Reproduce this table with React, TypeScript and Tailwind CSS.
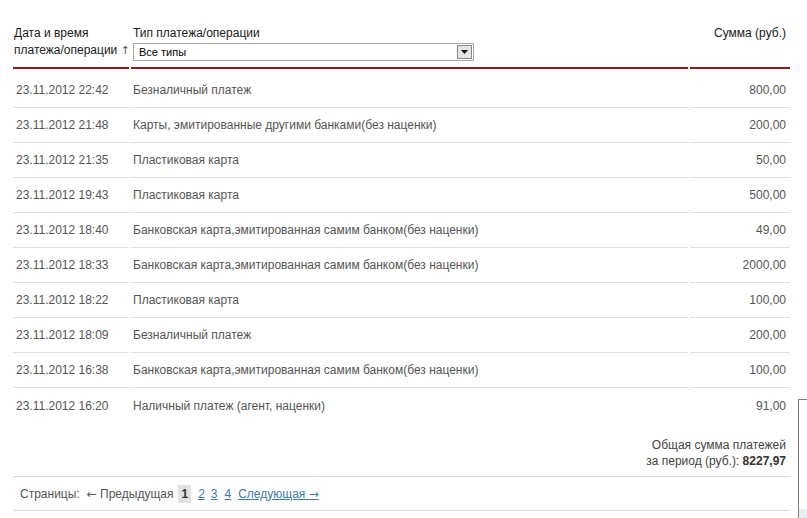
import React from 'react';

const ROWS: [string, string, string][] = [
  ['23.11.2012 22:42', 'Безналичный платеж', '800,00'],
  ['23.11.2012 21:48', 'Карты, эмитированные другими банками(без наценки)', '200,00'],
  ['23.11.2012 21:35', 'Пластиковая карта', '50,00'],
  ['23.11.2012 19:43', 'Пластиковая карта', '500,00'],
  ['23.11.2012 18:40', 'Банковская карта,эмитированная самим банком(без наценки)', '49,00'],
  ['23.11.2012 18:33', 'Банковская карта,эмитированная самим банком(без наценки)', '2000,00'],
  ['23.11.2012 18:22', 'Пластиковая карта', '100,00'],
  ['23.11.2012 18:09', 'Безналичный платеж', '200,00'],
  ['23.11.2012 16:38', 'Банковская карта,эмитированная самим банком(без наценки)', '100,00'],
  ['23.11.2012 16:20', 'Наличный платеж (агент, наценки)', '91,00'],
];

const arrowFont = { fontFamily: '"DejaVu Sans", sans-serif' };

export default function App() {
  return (
    <div
      className="relative h-[518px] w-[807px] overflow-hidden bg-white text-[12px]"
      style={{ fontFamily: '"Liberation Sans", Arial, sans-serif' }}
    >
      <div className="ml-[13px] w-[777px]">
        {/* Header */}
        <div className="flex gap-[2px] pt-[25px] leading-[17px] text-[#1a1a1a]">
          <div className="w-[116px] pl-[1px] pb-[8px] border-b-2 border-[#8c1d1d]">
            <div>Дата и время</div>
            <div className="whitespace-nowrap">
              платежа/операции <span className="text-[11px] text-[#555]" style={arrowFont}>↑</span>
            </div>
          </div>
          <div className="w-[557px] pl-[2px] border-b-2 border-[#8c1d1d]">
            <div>Тип платежа/операции</div>
            <div className="mt-[1px] flex h-[18px] w-[341px] items-center border border-[#a5a5a5] bg-white">
              <span className="flex-1 pl-[5px] text-[11px] leading-none text-black">Все типы</span>
              <span className="mr-[1px] flex h-[14px] w-[15px] items-center justify-center border border-[#8a8a8a] bg-[#e4e4e4]">
                <svg width="7" height="4" viewBox="0 0 7 4">
                  <path d="M0 0h7L3.5 4z" fill="#111" />
                </svg>
              </span>
            </div>
          </div>
          <div className="w-[100px] pr-[4px] text-right border-b-2 border-[#8c1d1d]">Сумма (руб.)</div>
        </div>

        {/* Body */}
        <div className="pt-[4px] text-[#555]">
          {ROWS.map(([date, type, sum], i) => {
            const last = i === ROWS.length - 1;
            const b = last ? '' : 'border-b border-[#dedede]';
            return (
              <div key={i} className="flex h-[35px] gap-[2px]">
                <div className={`flex w-[116px] items-center pl-[3px] ${b}`}>{date}</div>
                <div className={`flex w-[557px] items-center pl-[2px] ${b}`}>{type}</div>
                <div className={`flex w-[100px] items-center justify-end pr-[4px] ${b}`}>{sum}</div>
              </div>
            );
          })}
        </div>

        {/* Total */}
        <div className="border-b border-[#d8d8d8] pt-[14px] pb-[7px] pr-[4px] text-right leading-[16px] text-[#444]">
          <div>Общая сумма платежей</div>
          <div>
            за период (руб.): <b className="text-[#333]">8227,97</b>
          </div>
        </div>

        {/* Pagination */}
        <div className="flex h-[34px] items-center border-b border-[#d8d8d8] pl-[7px] text-[#555]">
          <span>Страницы:</span>
          <span className="ml-[7px]">
            <span style={arrowFont}>←</span> Предыдущая
          </span>
          <span className="ml-[5px] bg-[#e2e2e2] px-[3px] font-bold text-[#333]">1</span>
          <a className="ml-[7px] text-[#3d7aab] underline">2</a>
          <a className="ml-[6px] text-[#3d7aab] underline">3</a>
          <a className="ml-[7px] text-[#3d7aab] underline">4</a>
          <a className="ml-[7px] text-[#3d7aab] underline">
            Следующая <span style={arrowFont}>→</span>
          </a>
        </div>
      </div>

      {/* partially visible panel on the right edge */}
      <div className="absolute left-[798px] top-[399px] flex h-[130px] w-[20px] flex-col border-l border-t border-[#808080]">
        <div className="flex-1" />
        <div className="h-[20px] bg-[#e8edf3]" />
      </div>
    </div>
  );
}
